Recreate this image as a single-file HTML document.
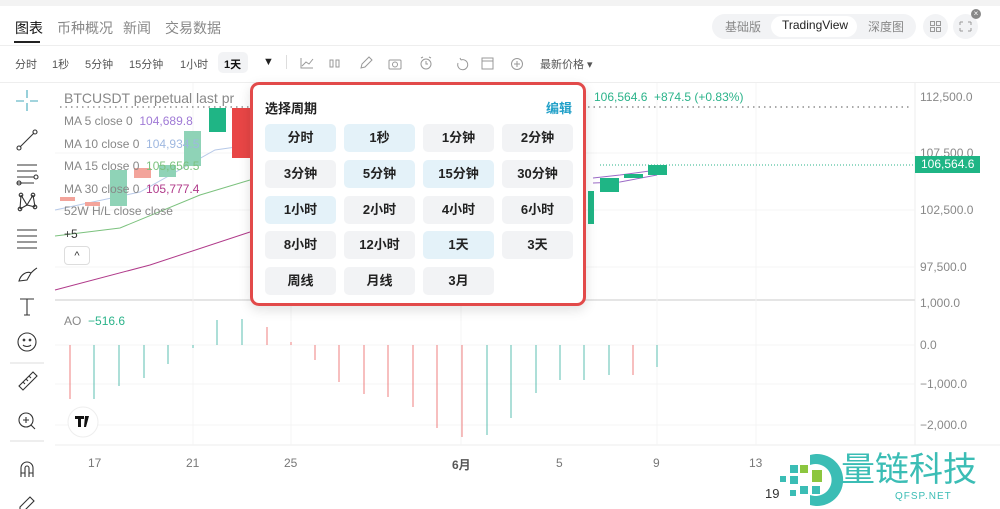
<!DOCTYPE html>
<html><head><meta charset="utf-8"><style>
*{margin:0;padding:0;box-sizing:border-box}
body{width:1000px;height:509px;overflow:hidden;background:#fff;font-family:"Liberation Sans","Noto Sans CJK SC",sans-serif;position:relative;color:#333}
.a{position:absolute;white-space:nowrap}
.btn{position:absolute;width:71px;height:28px;border-radius:5px;background:#f2f3f5;font-size:13px;font-weight:bold;text-align:center;line-height:28px;color:#222}
.b{background:#e4f2f9}
.ax{position:absolute;left:920px;font-size:12px;color:#888}
.tb{font-size:11px;color:#555;top:56px}
</style></head><body>
<div class="a" style="left:0;top:0;width:1000px;height:6px;background:#f3f3f3"></div>
<div class="a" style="left:15px;top:18px;font-size:14px;color:#111">图表</div>
<div class="a" style="left:14px;top:41px;width:26px;height:2px;background:#222"></div>
<div class="a" style="left:57px;top:18px;font-size:14px;color:#888">币种概况</div>
<div class="a" style="left:123px;top:18px;font-size:14px;color:#888">新闻</div>
<div class="a" style="left:165px;top:18px;font-size:14px;color:#888">交易数据</div>
<div class="a" style="left:712px;top:14px;width:204px;height:25px;border-radius:13px;background:#f2f3f5"></div>
<div class="a" style="left:771px;top:16px;width:86px;height:21px;border-radius:11px;background:#fff"></div>
<div class="a" style="left:725px;top:18px;font-size:12px;color:#888">基础版</div>
<div class="a" style="left:782px;top:18px;font-size:12px;color:#222">TradingView</div>
<div class="a" style="left:868px;top:18px;font-size:12px;color:#888">深度图</div>
<div class="a" style="left:923px;top:14px;width:25px;height:25px;border-radius:13px;background:#f2f3f5"></div>
<div class="a" style="left:953px;top:14px;width:25px;height:25px;border-radius:13px;background:#f2f3f5"></div>
<svg class="a" style="left:923px;top:14px" width="60" height="25" fill="none" stroke="#999" stroke-width="1">
<rect x="7.5" y="7.5" width="4" height="4"/><rect x="13.5" y="7.5" width="4" height="4"/><rect x="7.5" y="13.5" width="4" height="4"/><rect x="13.5" y="13.5" width="4" height="4"/>
<path d="M37 8h3M37 8v3M48 8h-3M48 8v3M37 17h3M37 17v-3M48 17h-3M48 17v-3"/></svg>
<div class="a" style="left:971px;top:9px;width:10px;height:10px;border-radius:5px;background:#888;color:#fff;font-size:8px;text-align:center;line-height:10px">×</div>
<div class="a" style="left:0;top:45px;width:1000px;height:1px;background:#eee"></div>
<div class="a tb" style="left:15px">分时</div><div class="a tb" style="left:52px">1秒</div><div class="a tb" style="left:85px">5分钟</div><div class="a tb" style="left:129px">15分钟</div><div class="a tb" style="left:180px">1小时</div>
<div class="a" style="left:218px;top:52px;width:30px;height:21px;border-radius:5px;background:#f2f3f5"></div>
<div class="a tb" style="left:224px;font-weight:bold;color:#111">1天</div>
<div class="a tb" style="left:263px;color:#222">▼</div>
<div class="a" style="left:286px;top:55px;width:1px;height:14px;background:#ddd"></div>
<svg class="a" style="left:295px;top:54px" width="235" height="18" fill="none" stroke="#999" stroke-width="1">
<path d="M6 4v10h12M7 12l4-4 3 2 4-5"/>
<rect x="35" y="6" width="3" height="7"/><rect x="41" y="6" width="3" height="7"/>
<path d="M66 14l1-4 7-7 3 3-7 7z"/>
<rect x="94" y="6" width="12" height="9" rx="1"/><circle cx="100" cy="10.5" r="2.5"/>
<circle cx="131" cy="10" r="5"/><path d="M131 7v3h2M126 4l2-1M136 4l-2-1"/>
<path d="M166 6a5 5 0 1 1-3 3M166 6l-1-2"/>
<rect x="187" y="4" width="11" height="11"/><path d="M187 7h11"/>
<circle cx="222" cy="10" r="5.5"/><path d="M222 7v6M219 10h6"/></svg>
<div class="a tb" style="left:540px">最新价格 ▾</div>
<div class="a" style="left:0;top:82px;width:1000px;height:1px;background:#eee"></div>
<!-- left toolbar -->
<svg class="a" style="left:0;top:83px" width="50" height="426" fill="none" stroke="#333" stroke-width="1.1">
<path d="M27 7v8M27 20v8M16 18h8M30 18h8" stroke="#4ab"/>
<path d="M20 64l14-14"/><circle cx="19" cy="65" r="2"/><circle cx="35" cy="49" r="2"/>
<path d="M17 82h20M17 88h20M17 94h17M17 100h17"/><circle cx="36" cy="94" r="2"/><circle cx="19" cy="100" r="2"/>
<path d="M21 112l6 10 6-10M21 112l-1 14M33 112l2 12M20 126l7-4 8 2"/><circle cx="21" cy="112" r="1.8"/><circle cx="33" cy="112" r="1.8"/><circle cx="20" cy="126" r="1.8"/><circle cx="35" cy="124" r="1.8"/>
<path d="M17 147h20M17 153h20M17 159h20M17 165h20" stroke-dasharray="2 0"/>
<path d="M19 198c2-7 8-10 12-8l-4 7z M31 190c2-2 4-4 6-5"/>
<path d="M20 216h14M27 216v16M24 232h6"/>
<circle cx="27" cy="259" r="9"/><circle cx="24" cy="257" r=".8"/><circle cx="30" cy="257" r=".8"/><path d="M23 262c2 2 6 2 8 0"/>
<path d="M10 280h34" stroke="#ddd"/>
<path d="M19 303l14-14 4 4-14 14z M23 299l2 2M26 296l2 2M29 293l2 2"/>
<circle cx="26" cy="337" r="7"/><path d="M26 334v6M23 337h6M31 342l4 4"/>
<path d="M10 358h34" stroke="#ddd"/>
<path d="M21 394v-9a6 6 0 0 1 12 0v9M21 390h4M29 390h4M25 394v-9a2 2 0 0 1 4 0v9"/>
<path d="M20 424l10-10 4 4-10 10h-4z"/></svg>
<!-- chart svg -->
<svg class="a" style="left:0;top:0" width="1000" height="509">
<line x1="915" y1="83" x2="915" y2="445" stroke="#eee"/>
<line x1="55" y1="300" x2="915" y2="300" stroke="#e5e5e5" stroke-width="2"/>
<line x1="55" y1="445" x2="1000" y2="445" stroke="#eee"/>
<g stroke="#f4f4f4"><line x1="55" y1="153" x2="915" y2="153"/><line x1="55" y1="210" x2="915" y2="210"/><line x1="55" y1="267" x2="915" y2="267"/><line x1="55" y1="345" x2="915" y2="345"/><line x1="55" y1="384" x2="915" y2="384"/><line x1="55" y1="425" x2="915" y2="425"/><line x1="193" y1="83" x2="193" y2="445"/><line x1="291" y1="83" x2="291" y2="445"/><line x1="461" y1="83" x2="461" y2="445"/><line x1="657" y1="83" x2="657" y2="445"/><line x1="756" y1="83" x2="756" y2="445"/></g>
<line x1="60" y1="107" x2="910" y2="107" stroke="#555" stroke-dasharray="1.5 4"/>
<line x1="600" y1="165" x2="915" y2="165" stroke="#2bb38a" stroke-dasharray="1 2"/>
<path d="M55 290 L150 265 L250 232" stroke="#b03a8a" fill="none"/>
<path d="M55 236 L120 228 L200 195 L250 180" stroke="#7cc27e" fill="none"/>
<path d="M55 210 L140 192 L215 150 L250 145" stroke="#b7c9e8" fill="none"/>
<path d="M593 178 L620 175 L657 170 M593 183 L620 182 L657 175" stroke="#9b6ac6" fill="none"/>
<rect x="60" y="197" width="15" height="4" fill="#f3a49b"/><rect x="85" y="202" width="15" height="4" fill="#f3a49b"/>
<rect x="110" y="170" width="17" height="36" fill="#8fd3b7"/><rect x="134" y="168" width="17" height="10" fill="#f3a49b"/>
<rect x="159" y="165" width="17" height="12" fill="#8fd3b7"/><rect x="184" y="131" width="17" height="35" fill="#8fd3b7"/>
<rect x="209" y="108" width="17" height="24" fill="#1fb585"/><rect x="232" y="108" width="18" height="50" fill="#e84646"/>
<rect x="588" y="191" width="6" height="33" fill="#1fb585"/><rect x="600" y="178" width="19" height="14" fill="#1fb585"/>
<rect x="624" y="174" width="19" height="4" fill="#1fb585"/><rect x="648" y="165" width="19" height="10" fill="#1fb585"/>
<g stroke-width="1">
<line x1="70" y1="345" x2="70" y2="399" stroke="#ef7f7f"/><line x1="94" y1="345" x2="94" y2="399" stroke="#5bbfb0"/>
<line x1="119" y1="345" x2="119" y2="386" stroke="#5bbfb0"/><line x1="144" y1="345" x2="144" y2="378" stroke="#5bbfb0"/>
<line x1="168" y1="345" x2="168" y2="364" stroke="#5bbfb0"/><line x1="193" y1="345" x2="193" y2="348" stroke="#5bbfb0"/>
<line x1="217" y1="345" x2="217" y2="320" stroke="#5bbfb0"/><line x1="242" y1="345" x2="242" y2="319" stroke="#5bbfb0"/>
<line x1="267" y1="345" x2="267" y2="327" stroke="#ef7f7f"/><line x1="291" y1="345" x2="291" y2="342" stroke="#ef7f7f"/>
<line x1="315" y1="345" x2="315" y2="360" stroke="#ef7f7f"/><line x1="339" y1="345" x2="339" y2="382" stroke="#ef7f7f"/>
<line x1="364" y1="345" x2="364" y2="394" stroke="#ef7f7f"/><line x1="388" y1="345" x2="388" y2="397" stroke="#ef7f7f"/>
<line x1="413" y1="345" x2="413" y2="407" stroke="#ef7f7f"/><line x1="437" y1="345" x2="437" y2="428" stroke="#ef7f7f"/>
<line x1="462" y1="345" x2="462" y2="437" stroke="#ef7f7f"/><line x1="487" y1="345" x2="487" y2="435" stroke="#5bbfb0"/>
<line x1="511" y1="345" x2="511" y2="418" stroke="#5bbfb0"/><line x1="536" y1="345" x2="536" y2="393" stroke="#5bbfb0"/>
<line x1="560" y1="345" x2="560" y2="380" stroke="#5bbfb0"/><line x1="584" y1="345" x2="584" y2="380" stroke="#5bbfb0"/>
<line x1="609" y1="345" x2="609" y2="375" stroke="#5bbfb0"/><line x1="633" y1="345" x2="633" y2="375" stroke="#ef7f7f"/>
<line x1="657" y1="345" x2="657" y2="367" stroke="#5bbfb0"/>
</g>
<circle cx="83" cy="422" r="15" fill="#fff" stroke="#eee"/>
<path d="M75 416h9v3h-3v8h-3v-8h-3zM85 416h4l-3 11h-2z" fill="#111"/>
<!-- logo -->
<g fill="#3bbdb5"><path d="M810 455 a26 26 0 1 1 0 50 l0 -10 a16 16 0 1 0 0 -30z"/>
<rect x="790" y="465" width="8" height="8"/><rect x="800" y="465" width="8" height="8" fill="#8cc63f"/><rect x="780" y="476" width="6" height="6"/><rect x="790" y="476" width="8" height="8"/><rect x="812" y="470" width="10" height="12" fill="#8cc63f"/><rect x="800" y="486" width="8" height="8"/><rect x="790" y="490" width="6" height="6"/><rect x="812" y="486" width="8" height="8"/></g>
</svg>
<div class="a" style="left:841px;top:450px;font-size:34px;color:#3bbdb5;line-height:40px">量链科技</div>
<div class="a" style="left:895px;top:491px;font-size:10px;color:#3bbdb5;letter-spacing:1px">QFSP.NET</div>
<div class="a" style="left:765px;top:486px;font-size:13px;color:#333">19</div>
<!-- legends -->
<div class="a" style="left:64px;top:90px;font-size:14px;color:#888">BTCUSDT perpetual last pr</div>
<div class="a" style="left:594px;top:90px;font-size:12px;color:#2bb38a">106,564.6 &nbsp;+874.5 (+0.83%)</div>
<div class="a" style="left:64px;top:114px;font-size:12px;color:#888">MA 5 close 0 &nbsp;<span style="color:#a07ad6">104,689.8</span></div>
<div class="a" style="left:64px;top:137px;font-size:12px;color:#888">MA 10 close 0 &nbsp;<span style="color:#9fb8e0">104,934.5</span></div>
<div class="a" style="left:64px;top:159px;font-size:12px;color:#888">MA 15 close 0 &nbsp;<span style="color:#7cc27e">105,656.5</span></div>
<div class="a" style="left:64px;top:182px;font-size:12px;color:#888">MA 30 close 0 &nbsp;<span style="color:#b03a8a">105,777.4</span></div>
<div class="a" style="left:64px;top:204px;font-size:12px;color:#888">52W H/L close close</div>
<div class="a" style="left:64px;top:227px;font-size:12px;color:#333">+5</div>
<div class="a" style="left:64px;top:246px;width:26px;height:19px;border:1px solid #ddd;border-radius:4px;font-size:11px;text-align:center;line-height:18px">^</div>
<div class="a" style="left:64px;top:314px;font-size:12px;color:#888">AO &nbsp;<span style="color:#2bb38a">−516.6</span></div>
<!-- axis -->
<div class="ax" style="top:90px">112,500.0</div>
<div class="ax" style="top:146px">107,500.0</div>
<div class="a" style="left:915px;top:156px;width:65px;height:17px;background:#1fb585;color:#fff;font-size:12px;padding-left:6px;line-height:17px">106,564.6</div>
<div class="ax" style="top:203px">102,500.0</div>
<div class="ax" style="top:260px">97,500.0</div>
<div class="ax" style="top:296px">1,000.0</div>
<div class="ax" style="top:338px">0.0</div>
<div class="ax" style="top:377px">−1,000.0</div>
<div class="ax" style="top:418px">−2,000.0</div>
<div class="a" style="left:88px;top:456px;font-size:12px;color:#777">17</div>
<div class="a" style="left:186px;top:456px;font-size:12px;color:#777">21</div>
<div class="a" style="left:284px;top:456px;font-size:12px;color:#777">25</div>
<div class="a" style="left:452px;top:456px;font-size:12px;color:#555;font-weight:bold">6月</div>
<div class="a" style="left:556px;top:456px;font-size:12px;color:#777">5</div>
<div class="a" style="left:653px;top:456px;font-size:12px;color:#777">9</div>
<div class="a" style="left:749px;top:456px;font-size:12px;color:#777">13</div>
<!-- popup -->
<div class="a" style="left:250px;top:82px;width:336px;height:224px;border:3px solid #e24a4a;border-radius:9px;background:#fff;box-shadow:0 4px 12px rgba(0,0,0,.12)"></div>
<div class="a" style="left:265px;top:98px;font-size:13px;font-weight:bold;color:#222">选择周期</div>
<div class="a" style="left:546px;top:98px;font-size:13px;font-weight:bold;color:#21a0c8">编辑</div>
<div class="btn b" style="left:265px;top:124px">分时</div><div class="btn b" style="left:344px;top:124px">1秒</div><div class="btn" style="left:423px;top:124px">1分钟</div><div class="btn" style="left:502px;top:124px">2分钟</div>
<div class="btn" style="left:265px;top:160px">3分钟</div><div class="btn b" style="left:344px;top:160px">5分钟</div><div class="btn b" style="left:423px;top:160px">15分钟</div><div class="btn" style="left:502px;top:160px">30分钟</div>
<div class="btn b" style="left:265px;top:196px">1小时</div><div class="btn" style="left:344px;top:196px">2小时</div><div class="btn" style="left:423px;top:196px">4小时</div><div class="btn" style="left:502px;top:196px">6小时</div>
<div class="btn" style="left:265px;top:231px">8小时</div><div class="btn" style="left:344px;top:231px">12小时</div><div class="btn b" style="left:423px;top:231px">1天</div><div class="btn" style="left:502px;top:231px">3天</div>
<div class="btn" style="left:265px;top:267px">周线</div><div class="btn" style="left:344px;top:267px">月线</div><div class="btn" style="left:423px;top:267px">3月</div>
</body></html>
